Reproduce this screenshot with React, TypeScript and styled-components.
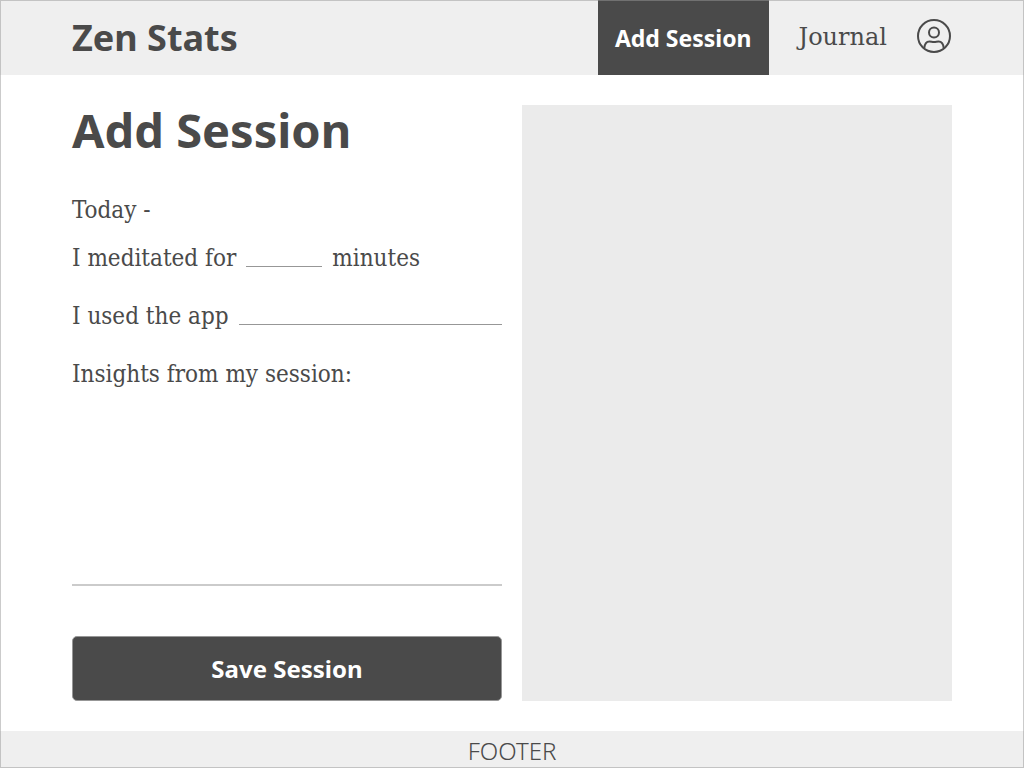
import React from "react";
import styled, { createGlobalStyle } from "styled-components";

const ink = "#4a4a4a";
const bar = "#efefef";
const sans = '"Noto Sans", "Open Sans", sans-serif';
const slab = '"DejaVu Serif Condensed", "DejaVu Serif", serif';
const wideSlab = '"DejaVu Serif", serif';

const GlobalStyle = createGlobalStyle`
  *, *::before, *::after { box-sizing: border-box; }
  body { margin: 0; background: #fff; color: ${ink}; font-family: ${slab}; }
`;

const Page = styled.div`
  position: relative;
  min-height: 100vh;
  display: flex;
  flex-direction: column;

  &::after {
    content: "";
    position: absolute;
    inset: 0;
    border: 1px solid rgba(151, 151, 151, 0.5);
    pointer-events: none;
  }
`;

const Header = styled.header`
  display: flex;
  align-items: stretch;
  justify-content: space-between;
  min-height: 75px;
  padding: 0 72px;
  background: ${bar};
`;

const Brand = styled.a`
  display: flex;
  align-items: center;
  color: ${ink};
  font: 700 36px/48px ${sans};
  text-decoration: none;
`;

const Nav = styled.nav`
  display: flex;
  align-items: stretch;
  gap: 30px;
`;

const NavLink = styled.a<{ $active?: boolean }>`
  display: flex;
  align-items: center;
  padding: ${(p) => (p.$active ? "0 17px" : "0 0 2px")};
  background: ${(p) => (p.$active ? ink : "transparent")};
  color: ${(p) => (p.$active ? "#fff" : ink)};
  font: ${(p) => (p.$active ? `700 23px/32px ${sans}` : `400 24px/32px ${wideSlab}`)};
  text-decoration: none;
`;

const ProfileButton = styled.button`
  display: flex;
  align-items: center;
  width: 35px;
  padding: 0 0 4px;
  border: 0;
  background: none;
  color: ${ink};
`;

const Main = styled.main`
  flex: 1;
  display: grid;
  grid-template-columns: repeat(2, minmax(0, 1fr));
  gap: 20px;
  padding: 30px 72px;
`;

const Form = styled.form`
  display: flex;
  flex-direction: column;
`;

const Title = styled.h1`
  margin: 0 0 39px;
  font: 700 47px/50px ${sans};
`;

const Today = styled.p`
  margin: 0 0 16px;
  font-size: 24px;
  line-height: 32px;
`;

const Row = styled.div`
  display: flex;
  gap: 10px;
  margin-bottom: 26px;
`;

const Label = styled.label`
  font-size: 24px;
  line-height: 32px;
  white-space: nowrap;
`;

const LineInput = styled.input<{ $short?: boolean }>`
  flex: ${(p) => (p.$short ? "0 0 76px" : "1")};
  min-width: 0;
  height: 25px;
  padding: 0;
  border: 0;
  border-bottom: 1px solid #979797;
  background: none;
  color: ${ink};
  font: 400 24px/24px ${slab};
`;

const Insights = styled.textarea`
  flex: 1;
  min-height: 100px;
  margin: 0 0 50px;
  padding: 8px 0;
  border: 0;
  border-bottom: 2px solid #cbcbcb;
  background: none;
  color: ${ink};
  font: 400 24px/32px ${slab};
  resize: none;
`;

const SaveButton = styled.button`
  height: 65px;
  border: 1px solid #979797;
  border-radius: 5px;
  background: ${ink};
  color: #fff;
  font: 700 24px/32px ${sans};
`;

const Panel = styled.aside`
  background: #ebebeb;
`;

const Footer = styled.footer`
  padding: 4px 0 1px;
  background: ${bar};
  font: 300 24px/32px ${sans};
  text-align: center;
`;

function ProfileIcon() {
  return (
    <svg width="34" height="34" viewBox="0 0 34 34" fill="none" stroke="currentColor" strokeWidth="2" aria-hidden="true">
      <circle cx="17" cy="17" r="16" />
      <circle cx="17" cy="13.5" r="5" />
      <path d="M7.3 29.3C7.6 25 9.8 22.5 12.5 22.5C14.2 22.5 15 23 17 23C19 23 19.8 22.5 21.5 22.5C24.2 22.5 26.4 25 26.7 29.3" />
    </svg>
  );
}

export default function App() {
  return (
    <>
      <GlobalStyle />
      <Page>
        <Header>
          <Brand href="#">Zen Stats</Brand>
          <Nav>
            <NavLink href="#add" $active aria-current="page">Add Session</NavLink>
            <NavLink href="#journal">Journal</NavLink>
            <ProfileButton type="button" aria-label="Profile">
              <ProfileIcon />
            </ProfileButton>
          </Nav>
        </Header>
        <Main>
          <Form>
            <Title>Add Session</Title>
            <Today>Today -</Today>
            <Row>
              <Label htmlFor="minutes">I meditated for</Label>
              <LineInput id="minutes" inputMode="numeric" $short />
              <Label htmlFor="minutes">minutes</Label>
            </Row>
            <Row>
              <Label htmlFor="app">I used the app</Label>
              <LineInput id="app" />
            </Row>
            <Label htmlFor="insights">Insights from my session:</Label>
            <Insights id="insights" />
            <SaveButton type="button">Save Session</SaveButton>
          </Form>
          <Panel />
        </Main>
        <Footer>FOOTER</Footer>
      </Page>
    </>
  );
}
